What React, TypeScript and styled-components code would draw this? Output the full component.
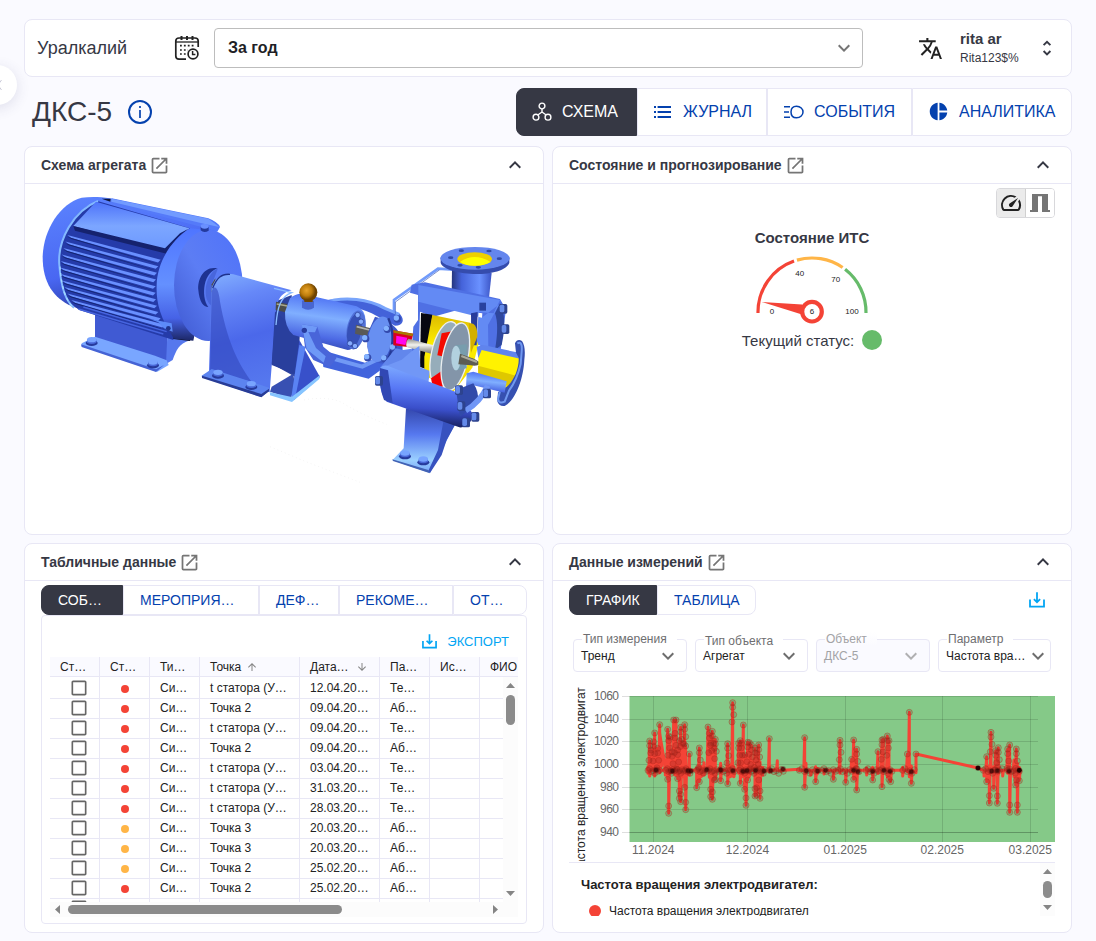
import React from 'react';
import styled, { createGlobalStyle } from 'styled-components';
import {
  MdCheckBoxOutlineBlank,
  MdKeyboardArrowDown,
  MdKeyboardArrowUp,
  MdOpenInNew,
  MdPieChart,
  MdSpeed,
  MdTranslate,
  MdArrowUpward,
  MdArrowDownward,
} from 'react-icons/md';

const c = {
  page: '#fafaff',
  line: '#e8e7f5',
  dark: '#363844',
  link: '#0441ae',
  accent: '#03a5f3',
  red: '#f44336',
  orange: '#ffb547',
  green: '#66bb6a',
  grey: '#757575',
};

const Global = createGlobalStyle`
  * { box-sizing: border-box; }
  body { margin: 0; background: ${c.page}; color: ${c.dark}; font-family: "Liberation Sans", Arial, sans-serif; overflow: hidden; }
  svg { display: block; flex: none; }
`;

const Page = styled.main`
  position: relative;
  width: 1096px;
  height: 941px;
  padding: 19px 24px 8px;
  overflow: hidden;
`;
const TopBar = styled.header`
  height: 58px;
  display: flex;
  align-items: center;
  padding: 0 16px 0 12px;
  background: #fff;
  border: 1px solid ${c.line};
  border-radius: 8px;
`;
const Company = styled.div`
  width: 137px;
  font-size: 18px;
`;
const PeriodSelect = styled.div`
  width: 649px;
  height: 40px;
  margin: 0 55px 0 14px;
  padding: 0 6px 0 13px;
  display: flex;
  align-items: center;
  justify-content: space-between;
  border: 1px solid #bdbdbd;
  border-radius: 4px;
  font-weight: 700;
  font-size: 16px;
  color: #1f1f26;
`;
const User = styled.div`
  width: 82px;
  margin-left: 17px;
  display: flex;
  flex-direction: column;
  gap: 4px;
  b { font-size: 15px; line-height: 17px; }
  span { font-size: 12px; line-height: 15px; }
`;
const Drawer = styled.div`
  position: absolute;
  left: -23px;
  top: 65px;
  width: 40px;
  height: 40px;
  border-radius: 50%;
  background: #fff;
  box-shadow: 0 3px 14px rgba(60, 60, 110, 0.14);
  display: flex;
  align-items: center;
  padding-left: 20px;
`;
const TitleRow = styled.div`
  height: 48px;
  margin-top: 11px;
  display: flex;
  align-items: center;
  justify-content: space-between;
`;
const Title = styled.h1`
  margin: 0;
  padding-left: 8px;
  display: flex;
  align-items: center;
  gap: 16px;
  font-size: 28px;
  font-weight: 400;
`;
const Tabs = styled.div`
  display: flex;
`;
const Tab = styled.div<{ $w: number; $on?: boolean; $small?: boolean }>`
  width: ${(p) => p.$w}px;
  height: ${(p) => (p.$small ? 30 : 48)}px;
  padding: 0 0 1px ${(p) => (p.$small ? 16 : 15)}px;
  display: flex;
  align-items: center;
  gap: 10px;
  white-space: nowrap;
  font-size: ${(p) => (p.$small ? 14 : 16)}px;
  color: ${(p) => (p.$on ? '#fff' : c.link)};
  background: ${(p) => (p.$on ? c.dark : '#fff')};
  border: 1px solid ${(p) => (p.$on ? c.dark : c.line)};
  &:first-child { border-radius: 8px 0 0 8px; }
  &:last-child { border-radius: 0 8px 8px 0; }
`;
const Grid = styled.div`
  margin-top: 10px;
  display: grid;
  grid-template-columns: 520px 520px;
  grid-template-rows: 389px 390px;
  gap: 8px;
`;
const Panel = styled.section`
  display: flex;
  flex-direction: column;
  background: #fff;
  border: 1px solid ${c.line};
  border-radius: 8px;
  overflow: hidden;
`;
const PanelHead = styled.div`
  height: 37px;
  flex: none;
  display: flex;
  align-items: center;
  padding: 0 16px;
  border-bottom: 1px solid ${c.line};
  font-size: 14px;
  font-weight: 700;
  .open { color: ${c.grey}; margin-left: 3px; }
  .fold { margin-left: auto; }
`;
const SchemeBody = styled.div`
  padding: 4px 16px;
`;
const StateBody = styled.div`
  padding: 4px 16px;
  display: flex;
  flex-direction: column;
`;
const ViewSwitch = styled.div`
  align-self: flex-end;
  width: 59px;
  height: 30px;
  display: flex;
  border: 1px solid #d8d8db;
  border-radius: 4px;
  overflow: hidden;
`;
const ViewButton = styled.div<{ $on?: boolean }>`
  flex: 1;
  display: flex;
  align-items: center;
  justify-content: center;
  color: #222;
  background: ${(p) => (p.$on ? '#ebebeb' : '#fff')};
  border-right: ${(p) => (p.$on ? '1px solid #d0d0d0' : '0')};
`;
const GaugeBox = styled.div`
  margin-top: 11px;
  display: flex;
  flex-direction: column;
  align-items: center;
  font-size: 15px;
  b { line-height: 18px; }
  svg { margin-top: 4px; }
`;
const Status = styled.div`
  display: flex;
  align-items: center;
  gap: 8px;
  margin-top: 1px;
  i { width: 20px; height: 20px; border-radius: 50%; background: ${c.green}; }
`;
const TableBody = styled.div`
  padding: 4px 16px 8px;
  display: flex;
  flex-direction: column;
  flex: 1;
`;
const TableCard = styled.div`
  height: 309px;
  border: 1px solid ${c.line};
  border-radius: 4px;
  padding: 0 8px;
`;
const Export = styled.div`
  height: 41px;
  display: flex;
  align-items: center;
  justify-content: flex-end;
  gap: 10px;
  padding: 9px 9px 0 0;
  font-size: 13px;
  color: ${c.accent};
`;
const Table = styled.div`
  height: 260px;
  width: 468px;
  font-size: 12px;
  color: #222;
  display: flex;
  flex-direction: column;
  overflow: hidden;
`;
const Row = styled.div<{ $head?: boolean }>`
  width: 480px;
  display: grid;
  grid-template-columns: 50px 50px 50px 100px 80px 50px 50px 60px;
  height: 20px;
  flex: none;
  background: ${(p) => (p.$head ? '#fafaff' : '#fff')};
`;
const Cell = styled.div<{ $center?: boolean }>`
  display: flex;
  align-items: center;
  padding: 0 ${(p) => (p.$center ? 0 : 9)}px 0 ${(p) => (p.$center ? 0 : 10)}px;
  justify-content: ${(p) => (p.$center ? 'center' : 'flex-start')};
  gap: 5px;
  white-space: nowrap;
  border-right: 1px solid ${c.line};
  border-bottom: 1px solid ${c.line};
  .check { color: #666; margin: 1px 0 0 8px; }
  .sort { color: #858585; }
  .end { margin-left: auto; margin-right: 2px; }
`;
const Dot = styled.i<{ $color: string }>`
  width: 8px;
  height: 8px;
  margin-top: 2px;
  border-radius: 50%;
  background: ${(p) => p.$color};
`;
const TableScroll = styled.div`
  display: flex;
  height: 225px;
`;
const Rows = styled.div`
  width: 453px;
  overflow: hidden;
`;
const VBar = styled.div<{ $h: number }>`
  width: 15px;
  height: ${(p) => p.$h}px;
  flex: none;
  background: #fcfcfc;
  display: flex;
  flex-direction: column;
  align-items: center;
  padding: 6px 0;
`;
const HBar = styled.div`
  height: 15px;
  background: #fcfcfc;
  display: flex;
  align-items: center;
  padding: 0 20px 0 5px;
`;
const Thumb = styled.div<{ $w: number; $h: number; $m: string }>`
  width: ${(p) => p.$w}px;
  height: ${(p) => p.$h}px;
  margin: ${(p) => p.$m};
  background: #8b8b8b;
  border-radius: 5px;
`;
const ChartBody = styled.div`
  padding: 4px 16px 0;
  display: flex;
  flex-direction: column;
`;
const ChartTop = styled.div`
  display: flex;
  align-items: center;
  justify-content: space-between;
  padding-right: 10px;
  color: ${c.accent};
`;
const Filters = styled.div`
  display: grid;
  grid-template-columns: 114px 113px 114px 113px;
  gap: 8px;
  padding: 24px 4px 0;
`;
const Field = styled.div<{ $off?: boolean }>`
  position: relative;
  height: 33px;
  padding: 1px 7px 0;
  display: flex;
  align-items: center;
  justify-content: space-between;
  white-space: nowrap;
  border: 1px solid ${c.line};
  border-radius: 4px;
  font-size: 12px;
  color: ${(p) => (p.$off ? '#a3a3a6' : '#222')};
  background: ${(p) => (p.$off ? c.page : '#fff')};
  svg { color: ${(p) => (p.$off ? '#b0b0b2' : '#6e6e6e')}; margin-right: -1px; }
`;
const FieldLabel = styled.span<{ $w: number; $drop?: boolean; $off?: boolean }>`
  position: absolute;
  left: 8px;
  top: ${(p) => (p.$drop ? -6 : -8)}px;
  width: ${(p) => p.$w}px;
  padding-left: 1px;
  line-height: 14px;
  color: ${(p) => (p.$off ? '#a3a3a6' : '#6e6e70')};
  background: linear-gradient(${(p) => (p.$off ? '#fff, #fafaff' : '#fff, #fff')});
`;
const ChartArea = styled.div`
  margin-top: 13px;
  height: 178px;
  border-bottom: 1px solid ${c.line};
`;
const Legend = styled.div`
  height: 53px;
  display: flex;
  justify-content: space-between;
  overflow: hidden;
`;
const LegendText = styled.div`
  padding: 14px 12px 0;
  color: #222;
  b { display: block; font-size: 13px; line-height: 16px; }
`;
const LegendItem = styled.div`
  margin: 11px 0 0 8px;
  display: flex;
  align-items: center;
  gap: 8px;
  font-size: 12px;
  line-height: 14px;
  i { width: 12px; height: 12px; border-radius: 50%; background: ${c.red}; }
`;

const CalendarIcon = () => (
  <svg width="26" height="26" viewBox="0 0 26 26" fill="none" stroke="#222" strokeWidth="1.7">
    <path d="M12 24.2H5Q1.8 24.2 1.8 21V6Q1.8 3 5 3H21Q24.2 3 24.2 6V12" />
    <path d="M1.8 7H24.2" strokeWidth="1.3" />
    <path d="M7.5 1V5M13 1V5M18.5 1V5" strokeWidth="2" />
    <path d="M6 10.7H20M6 15H14M6 19H12" strokeWidth="1.7" strokeDasharray="1.8 2.1" />
    <circle cx="19" cy="19" r="4.9" />
    <path d="M18.6 16V19.5H21.4" strokeWidth="1.5" />
  </svg>
);
const InfoIcon = () => (
  <svg width="24" height="24" viewBox="0 0 24 24" fill="none" stroke={c.link} strokeWidth="2">
    <circle cx="12" cy="12" r="11" />
    <path d="M12 6V8M12 10V18" strokeWidth="1.7" />
  </svg>
);
const NodesIcon = () => (
  <svg width="20" height="20" viewBox="0 0 20 20" fill="none" stroke="#fff" strokeWidth="1.4">
    <circle cx="10" cy="4" r="2.9" />
    <circle cx="4" cy="15.2" r="2.9" />
    <circle cx="16" cy="15.2" r="2.9" />
    <path d="M10 7V10L5.8 13M10 10L14.2 13" />
  </svg>
);
const ListIcon = () => (
  <svg width="20" height="20" viewBox="0 0 20 20" stroke={c.link} strokeWidth="1.8">
    <path d="M1 5H3M1 10H3M1 15H3M4.6 5H18M4.6 10H18M4.6 15H18" />
  </svg>
);
const EventsIcon = () => (
  <svg width="21" height="20" viewBox="0 0 21 20" fill="none" stroke={c.link} strokeWidth="1.5">
    <path d="M1 4.7H7M1 10H6M1 15.3H7" />
    <path d="M13.5 4.2C8.5 4.2 8 7.8 8 10S8.5 15.8 13.5 15.8C17.5 15.8 20 13 20 10S17.5 4.2 13.5 4.2Z" />
  </svg>
);
const UnfoldIcon = () => (
  <svg width="10" height="16" viewBox="0 0 10 16" fill="none" stroke={c.dark} strokeWidth="1.9">
    <path d="M1.6 5.2L5 1.8L8.4 5.2M1.6 11L5 14.4L8.4 11" />
  </svg>
);
const TrayIcon = ({ s }: { s: number }) => (
  <svg width={s} height={s} viewBox="0 0 16 16" fill="none" stroke={c.accent} strokeWidth="1.8">
    <path d="M1 7.5V14.6H15V7.5M8 .3V10M4.9 7.2L8 10.3L11.1 7.2" />
  </svg>
);
const GateIcon = () => (
  <svg width="20" height="18" viewBox="0 0 20 18" fill="#757575">
    <path d="M2 0H18V16H20V18H12V2.3H8V18H0V16H2Z" />
  </svg>
);
const Arrow = ({ d }: { d: 'up' | 'down' | 'left' | 'right' }) => {
  const shape = {
    up: 'M0 5L4.5 0L9 5Z',
    down: 'M0 0L4.5 5L9 0Z',
    left: 'M5 0L0 4.5L5 9Z',
    right: 'M0 0L5 4.5L0 9Z',
  }[d];
  const tall = d === 'left' || d === 'right';
  return (
    <svg width={tall ? 5 : 9} height={tall ? 9 : 5} fill="#858585">
      <path d={shape} />
    </svg>
  );
};

const fins = Array.from({ length: 11 }, (_, i) => {
  const y = 150 + i * 19.5;
  const x = [112, 106, 100, 95, 92, 90, 92, 96, 103, 112, 124][i];
  const r = [392, 385, 381, 378, 377, 377, 378, 381, 385, 392, 405][i];
  return { x, y, r, ry: y + (r - x) * 0.265 };
});
const Bolt = ({ x, y }: { x: number; y: number }) => (
  <g>
    <ellipse cx={x} cy={y + 6} rx="18" ry="9" fill="#263a9c" />
    <path d={`M${x - 14} ${y - 5}V${y + 5}Q${x} ${y + 13} ${x + 14} ${y + 5}V${y - 5}Z`} fill="#4a68d8" />
    <ellipse cx={x} cy={y - 4} rx="14" ry="8" fill="#78a4ff" />
  </g>
);

const Pump = () => (
  <svg width="486" height="300" viewBox="41 188 486 300">
    <defs>
      <linearGradient id="cap" x1="0" y1="0" x2=".25" y2="1">
        <stop offset="0" stopColor="#5c84ff" />
        <stop offset=".55" stopColor="#4967f2" />
        <stop offset=".82" stopColor="#2b3da8" />
        <stop offset="1" stopColor="#080b20" />
      </linearGradient>
      <linearGradient id="lid" x1="0" y1="0" x2="0" y2="1">
        <stop offset="0" stopColor="#4d72fa" />
        <stop offset=".5" stopColor="#7ca6ff" />
        <stop offset="1" stopColor="#6c98ff" />
      </linearGradient>
      <linearGradient id="ring" x1="0" y1="0" x2="0" y2="1">
        <stop offset="0" stopColor="#4f75ff" />
        <stop offset=".5" stopColor="#6490ff" />
        <stop offset=".8" stopColor="#4662e6" />
        <stop offset="1" stopColor="#1c2766" />
      </linearGradient>
      <linearGradient id="face" x1="1" y1="0" x2="0" y2="1">
        <stop offset="0" stopColor="#4f72fa" />
        <stop offset=".5" stopColor="#5c7df4" />
        <stop offset="1" stopColor="#3d57cf" />
      </linearGradient>
      <linearGradient id="guard" x1="0" y1="0" x2=".2" y2="1">
        <stop offset="0" stopColor="#83b0ff" />
        <stop offset=".25" stopColor="#6688f8" />
        <stop offset=".6" stopColor="#4b68ea" />
        <stop offset="1" stopColor="#5577ee" />
      </linearGradient>
      <linearGradient id="tube" x1=".2" y1="0" x2="0" y2="1">
        <stop offset="0" stopColor="#5074f4" />
        <stop offset=".35" stopColor="#80afff" />
        <stop offset=".7" stopColor="#4c69e4" />
        <stop offset="1" stopColor="#263998" />
      </linearGradient>
      <linearGradient id="volute" x1=".1" y1="0" x2="0" y2="1">
        <stop offset="0" stopColor="#7ca8ff" />
        <stop offset=".35" stopColor="#5878f5" />
        <stop offset=".65" stopColor="#3a4fca" />
        <stop offset="1" stopColor="#0c1240" />
      </linearGradient>
      <linearGradient id="neck" x1="0" x2="1">
        <stop offset="0" stopColor="#25367d" />
        <stop offset=".25" stopColor="#4563da" />
        <stop offset=".7" stopColor="#6a91ff" />
        <stop offset="1" stopColor="#3b54c5" />
      </linearGradient>
      <linearGradient id="foot" x1="0" y1="0" x2="0" y2="1">
        <stop offset="0" stopColor="#3448ad" />
        <stop offset=".4" stopColor="#5678ef" />
        <stop offset=".8" stopColor="#9bd0ff" />
        <stop offset="1" stopColor="#74a2f8" />
      </linearGradient>
      <linearGradient id="yellow" x1="0" y1="0" x2="0" y2="1">
        <stop offset="0" stopColor="#ddbb00" />
        <stop offset=".4" stopColor="#fff000" />
        <stop offset="1" stopColor="#eed400" />
      </linearGradient>
      <linearGradient id="steel" x1="0" y1="0" x2="0" y2="1">
        <stop offset="0" stopColor="#8b8b86" />
        <stop offset=".4" stopColor="#f2f2ee" />
        <stop offset="1" stopColor="#6b6b68" />
      </linearGradient>
      <radialGradient id="ball" cx=".4" cy=".4">
        <stop offset="0" stopColor="#e7a42c" />
        <stop offset=".6" stopColor="#bd7c0c" />
        <stop offset="1" stopColor="#6e4300" />
      </radialGradient>
    </defs>
    <g transform="translate(30 185) scale(.33333)">
      <path d="M195 380L412 450V535L375 542L195 470Z" fill="#405ad3" />
      <path d="M412 450L480 466C445 478 440 495 428 525L408 537Z" fill="#5678ed" />
      <path d="M155 475L195 455L375 512L410 526L416 540L382 560L155 484Z" fill="#79a6ff" />
      <path d="M153 478L378 553L402 540L378 561L155 486Z" fill="#4563d5" />
      <Bolt x={185} y={468} />
      <Bolt x={369} y={535} />
      <path d="M240 40C210 35 180 35 155 38C90 55 40 135 38 215C38 295 72 338 122 362L190 386L430 462L480 468L560 135L545 108Z" fill="url(#cap)" />
      <path d="M205 49C130 70 82 165 88 240C93 310 112 352 150 376L430 465L480 130Z" fill="#253ba9" />
      <path d="M204 48C130 78 82 165 88 240C93 310 108 350 132 368" fill="none" stroke="#83b9ff" strokeWidth="6" />
      <path d="M90 245C95 310 108 350 132 368" fill="none" stroke="#a2daff" strokeWidth="4" strokeDasharray="10 9" />
      {fins.map((f) => (
        <g key={f.y}>
          <path d={`M${f.x} ${f.y}L${f.r} ${f.ry}L${f.r - 8} ${f.ry + 8}L${f.x + 12} ${f.y + 9}Z`} fill="#6990ff" />
          <path d={`M${f.x} ${f.y + 5}L${f.r - 20} ${f.ry + 9}L${f.r - 10} ${f.ry + 13}L${f.x + 12} ${f.y + 12}Z`} fill="#14246f" />
        </g>
      ))}
      <path d="M145 372L400 447M160 366L410 440" stroke="#4664df" strokeWidth="4" />
      <path d="M198 50L478 130L407 197L130 123Z" fill="url(#lid)" />
      <path d="M130 123L405 190L450 145L474 132L410 206L135 137Z" fill="#15226e" />
      <path d="M245 40L535 100Q565 112 570 126L562 140L515 126L240 54Z" fill="#557af9" />
      <path d="M245 41L535 101L568 126L525 117L244 50Z" fill="#729bff" />
      <path d="M215 41L242 41L241 50Z" fill="#0f173b" />
      <path d="M480 130C430 160 382 225 380 300C378 350 388 395 432 461L490 467L560 137Z" fill="url(#ring)" />
      <ellipse cx="535" cy="301" rx="103" ry="167" fill="url(#face)" />
      <path d="M512 124H536V137Q522 145 512 136Z" fill="#243a9d" />
      <ellipse cx="524" cy="124" rx="12" ry="7" fill="#6a90ff" />
      <path d="M562 250C520 242 502 285 505 315C508 350 520 366 535 366C522 350 520 320 524 300C530 270 545 258 562 250Z" fill="#1e3291" />
      <path d="M360 402L425 415L428 440L402 430L385 412Z" fill="#5c8af9" />
      <circle cx="415" cy="430" r="7" fill="#20348d" />
      <path d="M564 250C545 258 527 285 527 318C527 342 535 356 545 362V300Z" fill="#4866dc" />
      <path d="M545 298L556 280V322H545Z" fill="#4b4b4d" />
      <path d="M734 350L785 330L795 575L722 535Z" fill="#2c429f" />
      <path d="M545 308C558 272 583 262 610 268L785 316C742 326 739 360 736 400L719 622L537 560Z" fill="url(#guard)" />
      <path d="M545 320C550 300 565 300 570 350C590 460 620 530 665 590L540 560Z" fill="#3248bd" opacity=".6" />
      <path d="M548 310C560 280 573 266 600 268" fill="none" stroke="#1e318d" strokeWidth="4" />
      <path d="M515 572L545 552L718 608L717 618L694 636L516 577Z" fill="#5c84f0" />
      <path d="M516 572L694 627L717 611V619L694 637L516 579Z" fill="#283c96" />
      <Bolt x={564} y={566} />
      <Bolt x={664} y={600} />
    </g>
    <g transform="translate(270 230) scale(.33333)">
      <path d="M15 245L90 305L82 435L5 405Z" fill="#293f9d" />
      <path d="M18 215L52 222V248L17 240Z" fill="#4b4c4a" />
      <path d="M20 222L52 228" stroke="#aaa98c" strokeWidth="4" />
      <path d="M12 175L65 188C30 200 22 235 18 285" fill="none" stroke="#8abbff" strokeWidth="4" />
      <path d="M5 470L70 431L76 480L60 505L0 485Z" fill="#3850b2" />
      <path d="M88 330L150 441L72 510L65 500Z" fill="#3850ca" />
      <path d="M88 345L107 350L75 506L64 500Z" fill="#5a83f3" />
      <path d="M0 487L65 501L150 435L148 447L66 516L0 496Z" fill="#87c5ff" />
      <path d="M160 213C220 198 295 208 350 236L390 252C405 270 400 287 375 287L305 250C260 225 200 230 175 229Z" fill="#4362d9" />
      <path d="M158 220C225 195 300 210 345 235L388 253" fill="none" stroke="#79a5fb" strokeWidth="9" />
      <path d="M155 360L285 398L345 370L360 400L296 446L160 411Z" fill="#4264dd" />
      <path d="M160 378L277 410L340 380" fill="none" stroke="#7199f5" strokeWidth="12" />
      <path d="M60 205Q85 183 115 196L260 229Q287 241 286 271C285 320 265 358 233 360L70 315Q43 292 45 245Z" fill="url(#tube)" />
      <ellipse cx="258" cy="300" rx="28" ry="59" transform="rotate(10 258 300)" fill="#5171d9" />
      <ellipse cx="253" cy="302" rx="21" ry="50" transform="rotate(10 253 302)" fill="#3650b7" />
      {[
        [263, 255],
        [273, 275],
        [240, 340],
        [255, 348],
      ].map(([x, y]) => (
        <circle key={x} cx={x} cy={y} r="8" fill="#86acff" stroke="#23388e" strokeWidth="2" />
      ))}
      <path d="M258 284L300 294V322L255 311Z" fill="#595957" />
      <path d="M260 290L299 300" stroke="#b4b4ae" strokeWidth="5" />
      <path d="M96 212Q115 202 132 213V233Q115 245 96 233Z" fill="#4866d1" />
      <path d="M103 200H128V216H103Z" fill="#6e4707" />
      <circle cx="115" cy="187" r="27" fill="url(#ball)" />
      <path d="M96 283L142 290L160 350L200 383L180 412L130 390L105 352Z" fill="#4965d9" />
      <path d="M95 283L142 290L135 307L115 306L138 354L167 379L161 398L110 358Z" fill="#6e99f7" />
      <circle cx="103" cy="301" r="8" fill="#283c9f" />
      <path d="M315 260C370 275 405 305 397 370L372 388C335 415 300 395 292 350L293 310Z" fill="#3d59c9" />
      <ellipse cx="330" cy="328" rx="36" ry="69" transform="rotate(10 330 328)" fill="#678ff1" />
      <path d="M355 265C375 310 370 360 350 395" fill="none" stroke="#253a96" strokeWidth="7" />
      {[
        [382, 267],
        [352, 298],
        [287, 326],
        [293, 383],
        [344, 386],
        [370, 354],
      ].map(([x, y]) => (
        <g key={y}>
          <circle cx={x} cy={y} r="11" fill="#334aad" />
          <circle cx={x - 3} cy={y - 3} r="8" fill="#83b2ff" />
        </g>
      ))}
      <path d="M372 248V210L504 116L552 119" fill="none" stroke="#719bfb" strokeWidth="8" />
      <path d="M376 252V216L508 120" fill="none" stroke="#3b59b7" strokeWidth="2" />
      <path d="M546 117L665 128L656 213L545 195Z" fill="url(#neck)" />
      <path d="M512 82V99C525 138 695 148 718 99V82Z" fill="#354cad" />
      <ellipse cx="615" cy="85" rx="104" ry="34" fill="#6486ed" />
      <ellipse cx="614" cy="87" rx="52" ry="20" fill="#eed000" />
      <path d="M570 96Q612 66 662 96Q645 107 614 107Q585 107 570 96Z" fill="#ffff00" />
      {[
        [542, 83],
        [574, 62],
        [657, 63],
        [688, 86],
        [625, 112],
        [570, 106],
      ].map(([x, y]) => (
        <ellipse key={x} cx={x} cy={y} rx="8" ry="4" fill="#304aa8" />
      ))}
      <path d="M425 164L465 157L690 207L708 238L690 375L630 360L637 250L560 241L490 260L450 245L445 398L380 405L330 410L380 360L425 362L430 290L444 270V195L420 188Z" fill="#4f70e4" />
      <path d="M445 165L690 210L671 250L626 246L619 344L655 350L654 285L688 223L635 263L445 215Z" fill="#638af4" />
      <path d="M628 218H648V242H628Z" fill="#2942a0" />
      <path d="M690 220Q713 265 695 345L675 359Q688 285 675 250Z" fill="#2e479e" />
      <path d="M453 249L487 254L470 418L450 411Z" fill="#070711" />
      <path d="M487 255L600 278L625 345L607 413L550 485L463 435L463 380Z" fill="url(#yellow)" />
      <path d="M603 250L623 246L620 346H604Z" fill="#283c9a" />
      <path d="M596 280Q623 275 622 320L603 369Z" fill="#d3b000" />
      <path d="M370 301L430 311L419 352L370 346Z" fill="#d8001f" />
      <path d="M370 301L430 311L427 319L371 308Z" fill="#a87a00" />
      <path d="M379 317L412 323L406 345L378 340Z" fill="#ff05ee" />
      <path d="M415 326L497 347L489 373L410 351Q406 335 415 326Z" fill="url(#steel)" />
      <path d="M377 355L400 360L425 356L433 386L330 415Z" fill="#6287ec" />
      <path d="M425 364L448 348L451 412L480 423L475 458L340 411L395 389Z" fill="#7197f6" />
      <ellipse cx="525" cy="374" rx="41" ry="101" transform="rotate(12 525 374)" fill="#96adba" stroke="#eceef0" strokeWidth="4" />
      <path d="M515 310L551 303L532 382L502 376Z" fill="#f40b00" />
      <path d="M483 445L518 421V470L488 468Z" fill="#f40000" />
      <ellipse cx="556" cy="380" rx="38" ry="103" transform="rotate(12 556 380)" fill="#8395a9" stroke="#e9eef0" strokeWidth="4" />
      <path d="M556 346L590 343V415L557 421Z" fill="#789dad" />
      <ellipse cx="558" cy="384" rx="14" ry="37" fill="#b2d1df" />
      <path d="M570 371L612 386L632 398Q625 410 602 406L565 403Z" fill="#5d5c53" />
      <path d="M574 378L621 396" stroke="#aaa99a" strokeWidth="7" />
      <path d="M625 370L640 355L756 382Q763 427 715 485L693 463L625 436Z" fill="#fff200" />
      <path d="M624 407L738 437L720 470L625 439Z" fill="#dfc800" />
      <path d="M640 345L740 367L754 387L635 360L625 384L620 350Z" fill="#6084ed" />
      <path d="M738 368L735 340Q742 325 756 333Q768 350 763 390C760 450 735 512 704 528Q686 530 682 514L684 487L710 470C735 450 748 409 746 383Z" fill="#3650b0" />
      <path d="M742 340Q758 331 755 365L752 402Q741 450 717 482L704 515Q687 523 684 507L690 484" fill="none" stroke="#7098f0" strokeWidth="6" />
      <path d="M590 430L610 425L710 454L704 488L607 465L587 494Z" fill="url(#tube)" />
      <path d="M408 535L530 565L555 582L526 640L480 729L367 691L401 655Z" fill="url(#foot)" />
      <path d="M521 570L558 580L530 630L515 675L480 729L475 722L504 660Z" fill="#3752bf" />
      <path d="M367 688L475 720L480 730L369 693Z" fill="#4262b4" />
      <path d="M330 414Q340 404 354 408L558 486L610 553Q600 595 568 592L350 515Q322 480 330 414Z" fill="url(#volute)" />
      <path d="M330 414L354 421L368 520L342 510Q326 470 330 414Z" fill="#3148b4" />
      <path d="M558 480L610 460Q627 485 625 519L570 560Z" fill="#314aa9" />
      <path d="M587 542Q632 515 653 467" fill="none" stroke="#7096f6" strokeWidth="17" />
      {[
        [699, 235],
        [705, 296],
        [650, 489],
        [615, 559],
        [587, 576],
        [573, 527],
        [566, 479],
        [326, 451],
      ].map(([x, y]) => (
        <g key={x}>
          <rect x={x - 11} y={y - 13} width="24" height="29" rx="5" fill="#2d438e" />
          <rect x={x - 10} y={y - 11} width="14" height="23" rx="5" fill="#648ae9" />
        </g>
      ))}
      <Bolt x={405} y={673} />
      <Bolt x={460} y={691} />
      <path d="M102 510C150 500 200 507 220 520S290 560 350 583M0 650L110 696L270 757" fill="none" stroke="#eee" strokeWidth="2" strokeDasharray="3 9" />
    </g>
  </svg>
);

const polar = (pct: number, r: number) => {
  const a = Math.PI * (1 - pct / 100);
  return `${62 + r * Math.cos(a)} ${61 - r * Math.sin(a)}`;
};
const arc = (from: number, to: number) => `M${polar(from, 54)}A54 54 0 0 1 ${polar(to, 54)}`;

const Gauge = () => (
  <svg width="124" height="78" viewBox="0 0 124 78" fill="none" strokeWidth="3.2">
    <path d={arc(-0.6, 39.2)} stroke={c.red} />
    <path d={arc(41, 69.2)} stroke={c.orange} />
    <path d={arc(71, 100.6)} stroke={c.green} />
    <path d="M11.6 51L52 53.5L52 63.5Z" fill={c.red} stroke="none" />
    <circle cx="62" cy="60.7" r="9.8" fill="#fff" stroke={c.red} strokeWidth="4.2" />
    <g fill="#222" stroke="none" fontSize="8" textAnchor="middle">
      <text x="22" y="63">0</text>
      <text x="49.7" y="25">40</text>
      <text x="85.7" y="31">70</text>
      <text x="102" y="63">100</text>
      <text x="62" y="63">6</text>
    </g>
  </svg>
);

// [x, highest, lowest] excursions of the trend in third-of-a-pixel units.
const spikes: number[][] = [
  [264, 260, 280], [269, 183, 288], [273, 210, 271], [281, 185, 250], [284, 159, 288], [293, 205, 271], [299, 134, 278],
  [316, 240, 285], [323, 148, 298], [326, 168, 400], [330, 172, 280], [336, 215, 271], [341, 120, 275], [345, 160, 285], [348, 120, 285],
  [353, 210, 296], [358, 182, 355], [362, 142, 365], [368, 190, 290], [374, 134, 322], [377, 198, 389], [388, 222, 285], [410, 265, 323],
  [418, 204, 305], [424, 260, 290], [432, 248, 285], [444, 141, 271], [448, 160, 292], [452, 190, 350], [457, 154, 358],
  [463, 205, 300], [466, 178, 298], [482, 250, 302], [503, 191, 311], [511, 255, 290], [518, 68, 288], [522, 260, 290],
  [536, 190, 280], [541, 182, 310], [544, 190, 285], [550, 135, 290], [554, 225, 328], [558, 255, 376], [563, 187, 300], [568, 188, 290],
  [574, 195, 271], [580, 245, 271], [585, 204, 348], [590, 220, 345], [596, 195, 300], [600, 245, 355], [608, 262, 285],
  [628, 176, 275], [652, 242, 270], [668, 266, 270], [718, 268, 272], [734, 173, 322], [738, 250, 275], [752, 272, 285], [767, 260, 305], [772, 265, 282],
  [792, 268, 282], [820, 270, 298], [840, 181, 280], [857, 270, 307], [875, 238, 275], [881, 180, 298], [890, 208, 330], [920, 264, 285],
  [938, 262, 300], [954, 215, 280], [966, 180, 320], [970, 178, 271], [982, 168, 290], [987, 182, 298], [992, 270, 305], [1028, 262, 288],
  [1042, 222, 275], [1048, 97, 290], [1054, 258, 310], [1068, 222, 275],
];
const lateSpikes: number[][] = [
  [1254, 260, 267], [1272, 270, 288], [1280, 230, 305], [1288, 258, 369], [1293, 157, 280], [1301, 260, 325], [1307, 212, 282],
  [1312, 260, 370], [1315, 203, 285], [1328, 275, 288], [1343, 207, 280], [1349, 195, 397], [1362, 240, 290], [1367, 240, 315], [1369, 207, 300],
  [1372, 250, 397], [1378, 262, 302],
];
const trace = (list: number[][]) =>
  list.map(([x, hi, lo]) => `L${x - 2.5} 271L${x} ${hi}V${lo}L${x + 2.5} 271`).join('');
const trend =
  'M264 271' + trace(spikes.slice(0, 55)) + 'L718 268' + trace(spikes.slice(55, -1)) + 'L1068 278V222L1254 264' + trace(lateSpikes.slice(1));

const markers: number[][] = [];
[...spikes, ...lateSpikes].forEach(([x, hi, lo], i) => {
  if (hi < 240) markers.push([x, hi]);
  if (lo > 295) markers.push([x, lo]);
  if (hi < 220 && i % 2) markers.push([x, hi + 14], [x + 3, hi + 36], [x - 2, hi + 58]);
  if (lo > 340) markers.push([x, lo - 22]);
});
const runs = [[264, 302, 5], [318, 392, 4], [410, 505, 5], [511, 525, 6], [538, 615, 4], [628, 670, 7], [718, 775, 8], [785, 900, 7], [918, 1000, 6], [1028, 1068, 7], [1270, 1330, 7], [1342, 1378, 6]];
runs.forEach(([a, b, step]) => {
  for (let x = a, i = 0; x <= b; x += step, i++) markers.push([x, 271 + [0, -5, 4, 1, 9, -2, 3][i % 7]]);
});
const darkDots = [
  [288, 270], [337, 273], [384, 272], [393, 273], [440, 269], [482, 270], [519, 272], [549, 274], [561, 272], [587, 271], [612, 273],
  [632, 272], [669, 267], [739, 272], [773, 273], [797, 271], [881, 271], [894, 275], [938, 274], [972, 271], [990, 274], [1054, 275],
  [1254, 264], [1295, 273], [1312, 272], [1347, 274], [1378, 271],
];

const Chart = () => {
  const values = [1060, 1040, 1020, 1000, 980, 960, 940];
  const months: [string, number][] = [
    ['11.2024', 84.3],
    ['12.2024', 178.5],
    ['01.2025', 276.3],
    ['02.2025', 373.3],
    ['03.2025', 461.3],
  ];
  return (
    <svg width="486" height="177" viewBox="0 0 486 177">
      <defs>
        <clipPath id="axisTitle">
          <rect x="0" y="2" width="30" height="174" />
        </clipPath>
      </defs>
      <rect x="60.5" y="11" width="425.5" height="146" fill="#85c988" />
      <g stroke="rgba(0,0,0,.13)" strokeWidth="1">
        {values.map((v, i) => (
          <path key={v} d={`M53 ${11.5 + Math.round(i * 22.67)}H469`} />
        ))}
        {months.map(([m, x]) => (
          <path key={m} d={`M${Math.floor(x) + 0.5} 11V157`} />
        ))}
      </g>
      <path d="M60.5 147.5H469" stroke="rgba(0,0,0,.15)" />
      <g fontSize="12" fill="#666">
        {values.map((v, i) => (
          <text key={v} x="50" y={15 + i * 22.67} textAnchor="end" textLength={v > 999 ? 25 : 19}>
            {v}
          </text>
        ))}
        {months.map(([m, x]) => (
          <text key={m} x={x} y="169" textAnchor="middle">
            {m}
          </text>
        ))}
      </g>
      <g clipPath="url(#axisTitle)">
        <text transform="translate(15.5 89) rotate(-90)" fontSize="12" fill="#222" textAnchor="middle">
          Частота вращения электродвигател
        </text>
      </g>
      <g transform="translate(-9 -5) scale(.33333)">
        <path d={trend} fill="none" stroke={c.red} strokeWidth="9" strokeLinejoin="round" />
        <path d="M299 134L299 275L318 245Z" fill={c.red} />
        <g fill="rgba(0,0,0,.11)" stroke="rgba(190,40,30,.45)" strokeWidth="3">
          {markers.map(([x, y], i) => (
            <circle key={i} cx={x} cy={y} r="9" />
          ))}
        </g>
        <g fill="rgba(20,0,0,.62)" stroke="rgba(90,10,10,.35)" strokeWidth="5">
          {darkDots.map(([x, y]) => (
            <circle key={x} cx={x} cy={y} r="6.5" />
          ))}
        </g>
        <circle cx="1254" cy="264" r="7" fill="#200" />
        <circle cx="1378" cy="271" r="7" fill="#200" />
      </g>
    </svg>
  );
};

const Head = ({ text }: { text: string }) => (
  <PanelHead>
    {text}
    <MdOpenInNew className="open" size={21} />
    <MdKeyboardArrowUp className="fold" size={24} />
  </PanelHead>
);

const T = 't статора (У…';
const rows: [string, string, string, string][] = [
  [c.red, T, '12.04.20…', 'Те…'],
  [c.red, 'Точка 2', '09.04.20…', 'Аб…'],
  [c.red, T, '09.04.20…', 'Те…'],
  [c.red, 'Точка 2', '09.04.20…', 'Аб…'],
  [c.red, T, '03.04.20…', 'Те…'],
  [c.red, T, '31.03.20…', 'Те…'],
  [c.red, T, '28.03.20…', 'Те…'],
  [c.orange, 'Точка 3', '20.03.20…', 'Аб…'],
  [c.orange, 'Точка 3', '20.03.20…', 'Аб…'],
  [c.orange, 'Точка 2', '25.02.20…', 'Аб…'],
  [c.red, 'Точка 2', '25.02.20…', 'Аб…'],
  [c.red, 'Точка 2', '25.02.20…', 'Аб…'],
];

export default function App() {
  return (
    <Page>
      <Global />
      <TopBar>
        <Company>Уралкалий</Company>
        <CalendarIcon />
        <PeriodSelect>
          За год
          <MdKeyboardArrowDown size={24} color="#757575" />
        </PeriodSelect>
        <MdTranslate size={25} color="#222" />
        <User>
          <b>rita ar</b>
          <span>Rita123$%</span>
        </User>
        <UnfoldIcon />
      </TopBar>
      <Drawer>
        <svg width="5" height="12" fill="none" stroke="#c9c9d8">
          <path d="M4.5 1L1 6L4.5 11" />
        </svg>
      </Drawer>
      <TitleRow>
        <Title>
          ДКС-5
          <InfoIcon />
        </Title>
        <Tabs>
          <Tab $w={121} $on>
            <NodesIcon />
            СХЕМА
          </Tab>
          <Tab $w={130}>
            <ListIcon />
            ЖУРНАЛ
          </Tab>
          <Tab $w={145}>
            <EventsIcon />
            СОБЫТИЯ
          </Tab>
          <Tab $w={160}>
            <MdPieChart size={21} />
            АНАЛИТИКА
          </Tab>
        </Tabs>
      </TitleRow>
      <Grid>
        <Panel>
          <Head text="Схема агрегата" />
          <SchemeBody>
            <Pump />
          </SchemeBody>
        </Panel>
        <Panel>
          <Head text="Состояние и прогнозирование" />
          <StateBody>
            <ViewSwitch>
              <ViewButton $on>
                <MdSpeed size={24} />
              </ViewButton>
              <ViewButton>
                <GateIcon />
              </ViewButton>
            </ViewSwitch>
            <GaugeBox>
              <b>Состояние ИТС</b>
              <Gauge />
              <Status>
                Текущий статус:
                <i />
              </Status>
            </GaugeBox>
          </StateBody>
        </Panel>
        <Panel>
          <Head text="Табличные данные" />
          <TableBody>
            <Tabs>
              <Tab $small $w={82} $on>СОБ…</Tab>
              <Tab $small $w={136}>МЕРОПРИЯ…</Tab>
              <Tab $small $w={80}>ДЕФ…</Tab>
              <Tab $small $w={114}>РЕКОМЕ…</Tab>
              <Tab $small $w={74}>ОТ…</Tab>
            </Tabs>
            <TableCard>
              <Export>
                <TrayIcon s={15} />
                ЭКСПОРТ
              </Export>
              <Table>
                <Row $head>
                  <Cell>Ст…</Cell>
                  <Cell>Ст…</Cell>
                  <Cell>Ти…</Cell>
                  <Cell>
                    Точка
                    <MdArrowUpward className="sort" size={12} />
                  </Cell>
                  <Cell>
                    Дата…
                    <MdArrowDownward className="sort end" size={12} />
                  </Cell>
                  <Cell>Па…</Cell>
                  <Cell>Ис…</Cell>
                  <Cell>ФИО</Cell>
                </Row>
                <TableScroll>
                  <Rows>
                    {rows.map(([color, point, date, kind], i) => (
                      <Row key={i}>
                        <Cell $center>
                          <MdCheckBoxOutlineBlank className="check" size={20} />
                        </Cell>
                        <Cell $center>
                          <Dot $color={color} />
                        </Cell>
                        <Cell>Си…</Cell>
                        <Cell>{point}</Cell>
                        <Cell>{date}</Cell>
                        <Cell>{kind}</Cell>
                        <Cell />
                        <Cell />
                      </Row>
                    ))}
                  </Rows>
                  <VBar $h={225}>
                    <Arrow d="up" />
                    <Thumb $w={9} $h={30} $m="7px 0 auto" />
                    <Arrow d="down" />
                  </VBar>
                </TableScroll>
                <HBar>
                  <Arrow d="left" />
                  <Thumb $w={274} $h={9} $m="0 auto 0 8px" />
                  <Arrow d="right" />
                </HBar>
              </Table>
            </TableCard>
          </TableBody>
        </Panel>
        <Panel>
          <Head text="Данные измерений" />
          <ChartBody>
            <ChartTop>
              <Tabs>
                <Tab $small $w={88} $on>ГРАФИК</Tab>
                <Tab $small $w={99}>ТАБЛИЦА</Tab>
              </Tabs>
              <TrayIcon s={16} />
            </ChartTop>
            <Filters>
              <Field>
                <FieldLabel $w={95}>Тип измерения</FieldLabel>
                Тренд
                <MdKeyboardArrowDown size={24} />
              </Field>
              <Field>
                <FieldLabel $w={79} $drop>Тип объекта</FieldLabel>
                Агрегат
                <MdKeyboardArrowDown size={24} />
              </Field>
              <Field $off>
                <FieldLabel $w={52} $off>Объект</FieldLabel>
                ДКС-5
                <MdKeyboardArrowDown size={24} />
              </Field>
              <Field>
                <FieldLabel $w={66}>Параметр</FieldLabel>
                Частота вра…
                <MdKeyboardArrowDown size={24} />
              </Field>
            </Filters>
            <ChartArea>
              <Chart />
            </ChartArea>
            <Legend>
              <LegendText>
                <b>Частота вращения электродвигател:</b>
                <LegendItem>
                  <i />
                  Частота вращения электродвигател
                </LegendItem>
              </LegendText>
              <VBar $h={53}>
                <Arrow d="up" />
                <Thumb $w={9} $h={17} $m="7px 0 auto" />
                <Arrow d="down" />
              </VBar>
            </Legend>
          </ChartBody>
        </Panel>
      </Grid>
    </Page>
  );
}
